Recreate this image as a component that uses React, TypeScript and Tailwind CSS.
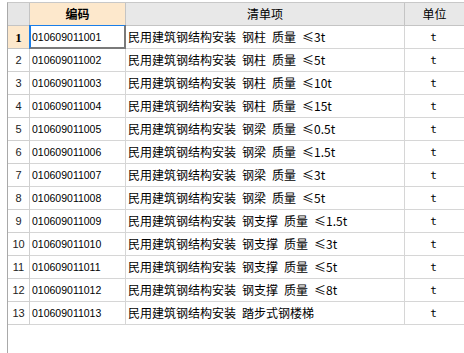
import React from 'react';

const rows = [
  { code: '010609011001', name: '民用建筑钢结构安装 钢柱 质量 ≤3t' },
  { code: '010609011002', name: '民用建筑钢结构安装 钢柱 质量 ≤5t' },
  { code: '010609011003', name: '民用建筑钢结构安装 钢柱 质量 ≤10t' },
  { code: '010609011004', name: '民用建筑钢结构安装 钢柱 质量 ≤15t' },
  { code: '010609011005', name: '民用建筑钢结构安装 钢梁 质量 ≤0.5t' },
  { code: '010609011006', name: '民用建筑钢结构安装 钢梁 质量 ≤1.5t' },
  { code: '010609011007', name: '民用建筑钢结构安装 钢梁 质量 ≤3t' },
  { code: '010609011008', name: '民用建筑钢结构安装 钢梁 质量 ≤5t' },
  { code: '010609011009', name: '民用建筑钢结构安装 钢支撑 质量 ≤1.5t' },
  { code: '010609011010', name: '民用建筑钢结构安装 钢支撑 质量 ≤3t' },
  { code: '010609011011', name: '民用建筑钢结构安装 钢支撑 质量 ≤5t' },
  { code: '010609011012', name: '民用建筑钢结构安装 钢支撑 质量 ≤8t' },
  { code: '010609011013', name: '民用建筑钢结构安装 踏步式钢楼梯' },
];

const cjk = "font-[family-name:'Noto_Sans_CJK_SC','Noto_Sans',sans-serif]";
const latin = "font-[family-name:'Liberation_Sans',Arial,sans-serif]";

export default function App() {
  return (
    <div className="w-[464px] h-[353px] bg-white overflow-hidden text-black">
      <div className="ml-[7px] mt-[2px] h-[351px] border-l border-t border-l-[#a9a9a9] border-t-[#c8c8c8]">
        {/* header */}
        <div className="grid grid-cols-[22px_96px_279px_1fr] h-[23px] text-[12px] leading-none">
          <div className="bg-[#e6e6e6] border-r border-b border-[#c4c4c4]" />
          <div className={`bg-[#fde8cc] border-r border-b border-[#c4c4c4] flex items-center justify-center font-bold ${cjk}`}>编码</div>
          <div className={`bg-[#e8e8e8] border-r border-b border-[#c4c4c4] flex items-center justify-center ${cjk}`}>清单项</div>
          <div className={`bg-[#e8e8e8] border-b border-[#c4c4c4] flex items-center justify-center ${cjk}`}>单位</div>
        </div>
        {rows.map((r, i) => (
          <div key={r.code} className="grid grid-cols-[22px_96px_279px_1fr] h-[23px] leading-none">
            {i === 0 ? (
              <div className="bg-[#fde8cc] border-r border-b border-[#c4c4c4] flex items-center justify-center text-[13px] font-bold font-[family-name:'Liberation_Serif',serif]">1</div>
            ) : (
              <div className={`bg-white border-r border-b border-[#d0d0d0] flex items-center justify-center text-[11px] text-[#222] ${latin}`}>{i + 1}</div>
            )}
            <div className={`relative border-r border-b border-[#d6d6d6] flex items-center pl-[2px] text-[10.5px] ${latin}`}>
              {r.code}
              {/* selected cell frame */}
              {i === 0 && (
                <div className="absolute -left-[1px] -top-[1px] -right-[1px] -bottom-[1px] border-l-2 border-t border-l-[#1a7ee8] border-t-[#1a7ee8] border-r-2 border-b-2 border-r-[#7a7a7a] border-b-[#7a7a7a]" />
              )}
            </div>
            <div className={`border-r border-b border-[#d6d6d6] flex items-center gap-[6px] pl-[2px] text-[12px] ${cjk}`}>
              {r.name.split(' ').map((part, j) => (
                <span key={j}>{part}</span>
              ))}
            </div>
            <div className="border-b border-[#d6d6d6] flex items-center justify-center text-[11px] pr-[2px] font-[family-name:'DejaVu_Sans_Mono',monospace]">t</div>
          </div>
        ))}
      </div>
    </div>
  );
}
